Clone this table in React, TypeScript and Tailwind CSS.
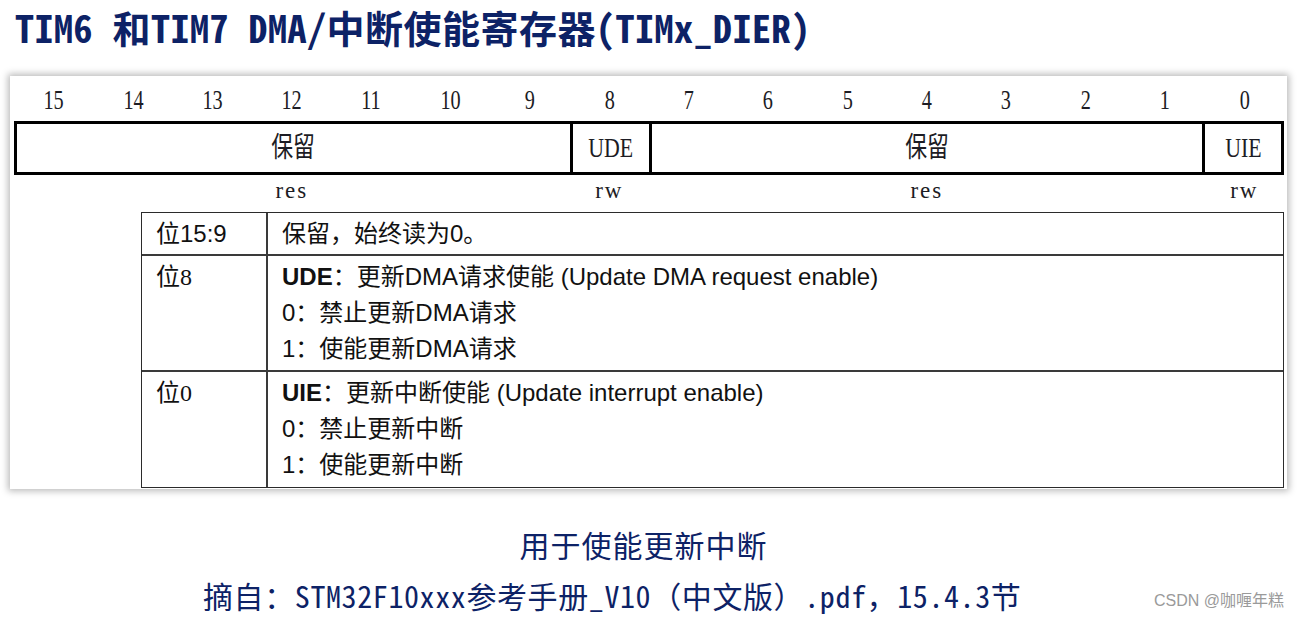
const bits = [15, 14, 13, 12, 11, 10, 9, 8, 7, 6, 5, 4, 3, 2, 1, 0];

const fields = [
  { name: '保留', span: 'col-span-7', access: 'res' },
  { name: 'UDE', span: 'col-span-1', access: 'rw' },
  { name: '保留', span: 'col-span-7', access: 'res' },
  { name: 'UIE', span: 'col-span-1', access: 'rw' },
];

const rows = [
  { bit: '位', num: '15:9', serifNum: false, h: 'h-[41px]', lines: [{ text: '保留，始终读为0。' }] },
  {
    bit: '位',
    num: '8',
    serifNum: true,
    h: 'h-[116px]',
    lines: [
      { bold: 'UDE', text: '：更新DMA请求使能 (Update DMA request enable)' },
      { text: '0：禁止更新DMA请求' },
      { text: '1：使能更新DMA请求' },
    ],
  },
  {
    bit: '位',
    num: '0',
    serifNum: true,
    h: 'h-[117px]',
    lines: [
      { bold: 'UIE', text: '：更新中断使能 (Update interrupt enable)' },
      { text: '0：禁止更新中断' },
      { text: '1：使能更新中断' },
    ],
  },
];

const serif = "font-['Liberation_Serif','Noto_Sans_CJK_SC',serif]";
const sans = "font-['Liberation_Sans','Noto_Sans_CJK_SC',sans-serif]";
const mono = "font-['Noto_Sans_Mono_CJK_SC','DejaVu_Sans_Mono','Noto_Sans_CJK_SC',monospace]";

export default function App() {
  return (
    <div className="w-[1299px] h-[618px] bg-white overflow-hidden relative">
      {/* Title */}
      <h1 className={`${mono} pl-[15px] pt-[1px] h-[76px] text-[38px] font-bold leading-[52px] text-[#0d2266] tracking-[0.5px]`}>
        TIM6 和TIM7 DMA/中断使能寄存器(TIMx_DIER)
      </h1>

      {/* Register card */}
      <div className="ml-[10px] w-[1277px] h-[413px] bg-white shadow-[0_0_7px_2px_rgba(0,0,0,0.28)] pl-[4px] pr-[3px] flex flex-col">
        <div className={`${serif} shrink-0 grid grid-cols-16 h-[45px] pt-[10px] text-[#1c1c24]`}>
          {bits.map((b) => (
            <div key={b} className="text-center leading-[28px]">
              <span className="inline-block text-[27px] scale-x-[0.75]">{b}</span>
            </div>
          ))}
        </div>

        <div className={`${serif} shrink-0 grid grid-cols-16 h-[54px] border-[3px] border-black text-[#1c1c24]`}>
          {fields.map((f, i) => (
            <div
              key={i}
              className={`${f.span} flex items-center justify-center ${i > 0 ? 'border-l-[3px] border-black' : ''}`}
            >
              <span className="inline-block text-[28px] scale-x-[0.78]">{f.name}</span>
            </div>
          ))}
        </div>

        <div className={`${serif} shrink-0 grid grid-cols-16 h-[37px] pt-[3px] text-[#1c1c24]`}>
          {fields.map((f, i) => (
            <div key={i} className={`${f.span} text-center leading-[26px]`}>
              <span className="inline-block text-[23px] tracking-[2px]">{f.access}</span>
            </div>
          ))}
        </div>

        {/* Bit description table */}
        <div className={`${sans} shrink-0 ml-[127px] border-[1.5px] border-[#2b2b2b] text-[24px] text-[#111]`}>
          {rows.map((r, i) => (
            <div key={i} className={`flex ${r.h} ${i > 0 ? 'border-t-[2px] border-[#3a3a3a]' : ''}`}>
              <div className="w-[126px] shrink-0 border-r-[2px] border-[#3a3a3a] pl-[14px] pt-[3px] leading-[36px]">
                {r.bit}
                <span className={r.serifNum ? serif : ''}>{r.num}</span>
              </div>
              <div className="flex-1 pl-[14px] pt-[3px]">
                {r.lines.map((l, j) => (
                  <div key={j} className="leading-[36px]">
                    {l.bold && <span className="font-bold">{l.bold}</span>}
                    {l.text}
                  </div>
                ))}
              </div>
            </div>
          ))}
        </div>
      </div>

      {/* Caption */}
      <div className={`${mono} text-center text-[#0d2266] mt-[36px] pr-[12px] text-[30px] tracking-[1px] leading-[38px]`}>
        用于使能更新中断
      </div>
      <div className={`${mono} pl-[203px] mt-[11px] text-[#0d2266] text-[30px] leading-[43px] tracking-[0.6px]`}>
        摘自：STM32F10xxx参考手册_V10（中文版）.pdf，15.4.3节
      </div>

      <div className="absolute right-[15px] bottom-[6px] text-[16px] leading-[22px] text-[#9a9a9a] font-['Liberation_Sans','Noto_Sans_CJK_SC',sans-serif]">
        CSDN @咖喱年糕
      </div>
    </div>
  );
}
